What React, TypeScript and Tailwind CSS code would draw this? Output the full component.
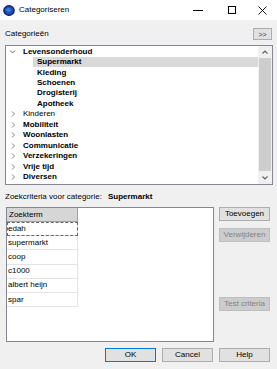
import React from "react";

type Node = { label: string; bold?: boolean; open?: boolean; selected?: boolean; children?: Node[] };

const tree: Node[] = [
  {
    label: "Levensonderhoud",
    bold: true,
    open: true,
    children: [
      { label: "Supermarkt", bold: true, selected: true },
      { label: "Kleding", bold: true },
      { label: "Schoenen", bold: true },
      { label: "Drogisterij", bold: true },
      { label: "Apotheek", bold: true },
    ],
  },
  { label: "Kinderen" },
  { label: "Mobiliteit", bold: true },
  { label: "Woonlasten", bold: true },
  { label: "Communicatie", bold: true },
  { label: "Verzekeringen", bold: true },
  { label: "Vrije tijd", bold: true },
  { label: "Diversen", bold: true },
  { label: "Inkomsten", bold: true },
];

const terms = ["edah", "supermarkt", "coop", "c1000", "albert heijn", "spar"];

function Chevron({ open }: { open?: boolean }) {
  return (
    <svg width="12" height="10" viewBox="0 0 12 10" className="shrink-0">
      {open ? (
        <path d="M3 3.5 L5.5 6 L8 3.5" fill="none" stroke="#555" strokeWidth="0.9" />
      ) : (
        <path d="M5 2.5 L7.5 5 L5 7.5" fill="none" stroke="#777" strokeWidth="0.9" />
      )}
    </svg>
  );
}

function Button({
  children,
  disabled,
  primary,
  className = "",
}: {
  children: React.ReactNode;
  disabled?: boolean;
  primary?: boolean;
  className?: string;
}) {
  const look = disabled
    ? "bg-[#cccccc] border-[#bfbfbf] text-[#838383]"
    : primary
      ? "bg-[#e1e1e1] border-[#0078d7] text-black"
      : "bg-[#e1e1e1] border-[#adadad] text-black";
  return (
    <div className={`w-[51px] h-[14px] border flex items-center justify-center leading-none ${look} ${className}`}>
      {children}
    </div>
  );
}

export default function App() {
  return (
    <div className="w-[277px] h-[369px] bg-[#f0f0f0] font-['Liberation_Sans',Arial,sans-serif] text-[8px] text-black flex flex-col overflow-hidden">
      {/* Title bar */}
      <div className="h-[20px] bg-white flex items-center shrink-0">
        <svg width="12" height="11" viewBox="0 0 12 11" className="ml-[3px]">
          <ellipse cx="6" cy="5.5" rx="5.2" ry="4.8" fill="#1d4fc4" stroke="#0b1a40" strokeWidth="1.2" />
          <ellipse cx="5.5" cy="5" rx="2.5" ry="2" fill="#3d78e8" />
        </svg>
        <span className="ml-[4px] leading-none">Categoriseren</span>
        <div className="ml-auto flex items-center">
          <div className="w-[10px] h-px bg-black mr-[25px]" />
          <div className="w-[8px] h-[8px] border border-black mr-[22px]" />
          <svg width="9" height="9" viewBox="0 0 9 9" className="mr-[10px]">
            <path d="M0.5 0.5 L8.5 8.5 M8.5 0.5 L0.5 8.5" stroke="#000" strokeWidth="0.9" />
          </svg>
        </div>
      </div>

      {/* Categories header */}
      <div className="mt-[8px] h-[12px] flex items-center pl-[5px] pr-[5px]">
        <span className="leading-none">Categorieën</span>
        <div className="ml-auto w-[19px] h-[12px] border border-[#adadad] bg-[#e1e1e1] flex items-center justify-center leading-none text-[#333] text-[7px]">
          &gt;&gt;
        </div>
      </div>

      {/* Tree */}
      <div className="mt-[5px] ml-[5px] w-[268px] h-[140px] border border-[#828790] bg-white flex overflow-hidden">
        <div className="flex-1 pt-[0.5px] overflow-hidden">
          {tree.map((n) => (
            <div key={n.label}>
              <div className="h-[10.45px] flex items-center pl-[1px]">
                <Chevron open={n.open} />
                <span className={`ml-[4px] leading-none ${n.bold ? "font-bold" : ""}`}>{n.label}</span>
              </div>
              {n.open &&
                n.children?.map((c) => (
                  <div
                    key={c.label}
                    className={`h-[10.45px] flex items-center ml-[27px] pl-[4px] ${c.selected ? "bg-[#d9d9d9]" : ""}`}
                  >
                    <span className="leading-none font-bold">{c.label}</span>
                  </div>
                ))}
            </div>
          ))}
        </div>
        {/* Scrollbar */}
        <div className="w-[14px] bg-[#f0f0f0] flex flex-col items-center">
          <div className="h-[12px] flex items-center justify-center">
            <svg width="8" height="6" viewBox="0 0 8 6">
              <path d="M1.5 4.5 L4 2 L6.5 4.5" fill="none" stroke="#606060" strokeWidth="1.1" />
            </svg>
          </div>
          <div className="flex-1 w-[12px] bg-[#cdcdcd]" />
          <div className="h-[13px] flex items-center justify-center">
            <svg width="8" height="6" viewBox="0 0 8 6">
              <path d="M1.5 1.5 L4 4 L6.5 1.5" fill="none" stroke="#606060" strokeWidth="1.1" />
            </svg>
          </div>
        </div>
      </div>

      {/* Criteria label */}
      <div className="mt-[6px] h-[12px] flex items-center pl-[5px]">
        <span className="leading-none">Zoekcriteria voor categorie:</span>
        <span className="ml-[6px] leading-none font-bold">Supermarkt</span>
      </div>

      {/* Table + side buttons */}
      <div className="mt-[4px] flex pl-[6px] pr-[7px]">
        <div className="w-[208px] h-[135px] border border-[#828790] bg-white">
          <div className="w-[71px] h-[14px] bg-[#d6d6d6] border-r border-b border-[#a0a0a0] flex items-center pl-[2px] leading-none">
            Zoekterm
          </div>
          {terms.map((t, i) => (
            <div
              key={t}
              className={`w-[71px] h-[14.2px] border-r border-b border-[#e3e3e3] flex items-center pl-[1px] leading-none ${
                i === 0 ? "outline outline-1 outline-dashed outline-[#666] -outline-offset-1" : ""
              }`}
            >
              {t}
            </div>
          ))}
        </div>
        <div className="ml-[5px] flex flex-col">
          <Button>Toevoegen</Button>
          <Button disabled className="mt-[7px]">
            Verwijderen
          </Button>
          <Button disabled className="mt-[55px]">
            Test criteria
          </Button>
        </div>
      </div>

      {/* Dialog buttons */}
      <div className="mt-[6px] flex justify-end pr-[7px] gap-[6px]">
        <Button primary>OK</Button>
        <Button>Cancel</Button>
        <Button>Help</Button>
      </div>
    </div>
  );
}
